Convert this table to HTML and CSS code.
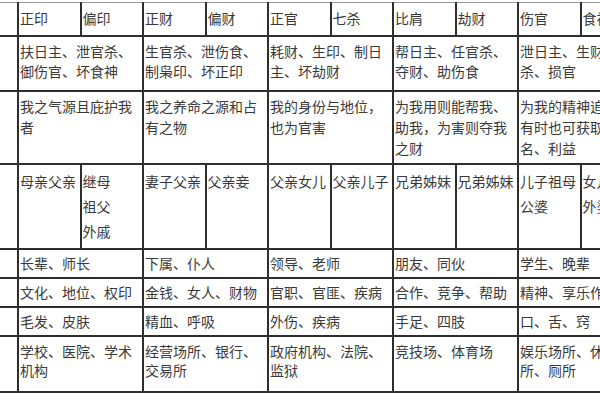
FILE: index.html
```html
<!DOCTYPE html>
<html lang="zh-CN">
<head>
<meta charset="utf-8">
<title>十神对照表</title>
<link rel="stylesheet" href="styles.css">
</head>
<body>
<div class="frame">
  <table class="shishen">
    <colgroup>
      <col class="c0">
      <col class="c"><col class="c"><col class="c"><col class="c"><col class="c">
      <col class="c"><col class="c"><col class="c"><col class="c"><col class="c">
    </colgroup>
    <tr class="r1">
      <td></td>
      <td>正印</td><td>偏印</td>
      <td>正财</td><td>偏财</td>
      <td>正官</td><td>七杀</td>
      <td>比肩</td><td>劫财</td>
      <td>伤官</td><td>食神</td>
    </tr>
    <tr class="r2">
      <td></td>
      <td colspan="2">扶日主、泄官杀、御伤官、坏食神</td>
      <td colspan="2">生官杀、泄伤食、制枭印、坏正印</td>
      <td colspan="2">耗财、生印、制日主、坏劫财</td>
      <td colspan="2">帮日主、任官杀、夺财、助伤食</td>
      <td colspan="2"><span class="nw">泄日主、生财、制官</span><br><span class="nw">杀、损官</span></td>
    </tr>
    <tr class="r3">
      <td></td>
      <td colspan="2">我之气源且庇护我者</td>
      <td colspan="2">我之养命之源和占有之物</td>
      <td colspan="2">我的身份与地位，也为官害</td>
      <td colspan="2">为我用则能帮我、助我，为害则夺我之财</td>
      <td colspan="2">为我的精神追求，有时也可获取功名、利益</td>
    </tr>
    <tr class="r4">
      <td></td>
      <td>母亲父亲</td><td>继母<br>祖父<br>外戚</td>
      <td>妻子父亲</td><td>父亲妾</td>
      <td>父亲女儿</td><td>父亲儿子</td>
      <td>兄弟姊妹</td><td>兄弟姊妹</td>
      <td>儿子祖母<br>公婆</td><td>女儿<br>外婆</td>
    </tr>
    <tr class="r5">
      <td></td>
      <td colspan="2">长辈、师长</td>
      <td colspan="2">下属、仆人</td>
      <td colspan="2">领导、老师</td>
      <td colspan="2">朋友、同伙</td>
      <td colspan="2">学生、晚辈</td>
    </tr>
    <tr class="r5">
      <td></td>
      <td colspan="2">文化、地位、权印</td>
      <td colspan="2">金钱、女人、财物</td>
      <td colspan="2">官职、官匪、疾病</td>
      <td colspan="2">合作、竞争、帮助</td>
      <td colspan="2"><span class="nw">精神、享乐作风</span></td>
    </tr>
    <tr class="r5">
      <td></td>
      <td colspan="2">毛发、皮肤</td>
      <td colspan="2">精血、呼吸</td>
      <td colspan="2">外伤、疾病</td>
      <td colspan="2">手足、四肢</td>
      <td colspan="2">口、舌、窍</td>
    </tr>
    <tr class="r8">
      <td></td>
      <td colspan="2">学校、医院、学术机构</td>
      <td colspan="2">经营场所、银行、交易所</td>
      <td colspan="2">政府机构、法院、监狱</td>
      <td colspan="2">竞技场、体育场</td>
      <td colspan="2">娱乐场所、休闲场所、厕所</td>
    </tr>
  </table>
</div>
</body>
</html>
```

FILE: styles.css
```css
html, body {
  margin: 0;
  padding: 0;
  background: #ffffff;
}

.frame {
  width: 600px;
  height: 400px;
  overflow: hidden;
  background: #ffffff;
  padding-top: 2px;
  box-sizing: border-box;
}

.shishen {
  table-layout: fixed;
  border-collapse: collapse;
  width: 644px;
  margin-left: -1px;
  font-family: "Noto Sans CJK SC", "Noto Sans", sans-serif;
  font-size: 14px;
  color: #3a3a3a;
  border-bottom: 2px solid #2e2e2e;
}

.c0 { width: 19px; }
.c { width: 62.5px; }

.shishen td {
  border: 2px solid #2e2e2e;
  padding: 0 0 0 1px;
  vertical-align: top;
  line-height: 21px;
  overflow: hidden;
  word-break: break-all;
}

.shishen tr:first-child td {
  border-top: 1px solid #9a9a9a;
}

.shishen td:first-child {
  border-left: none;
}

.nw {
  white-space: nowrap;
}

.r1 { height: 33px; }
.r1 td { vertical-align: middle; }

.r2 { height: 55px; }
.r2 td { padding-top: 4px; line-height: 20px; }

.r3 { height: 73px; }
.r3 td { padding-top: 4px; }

.r4 { height: 85px; }
.r4 td { padding-top: 4px; line-height: 25px; }

.r5 { height: 29px; }
.r5 td { vertical-align: middle; }

.r8 { height: 56px; }
.r8 td { padding-top: 5px; line-height: 19px; }
```
